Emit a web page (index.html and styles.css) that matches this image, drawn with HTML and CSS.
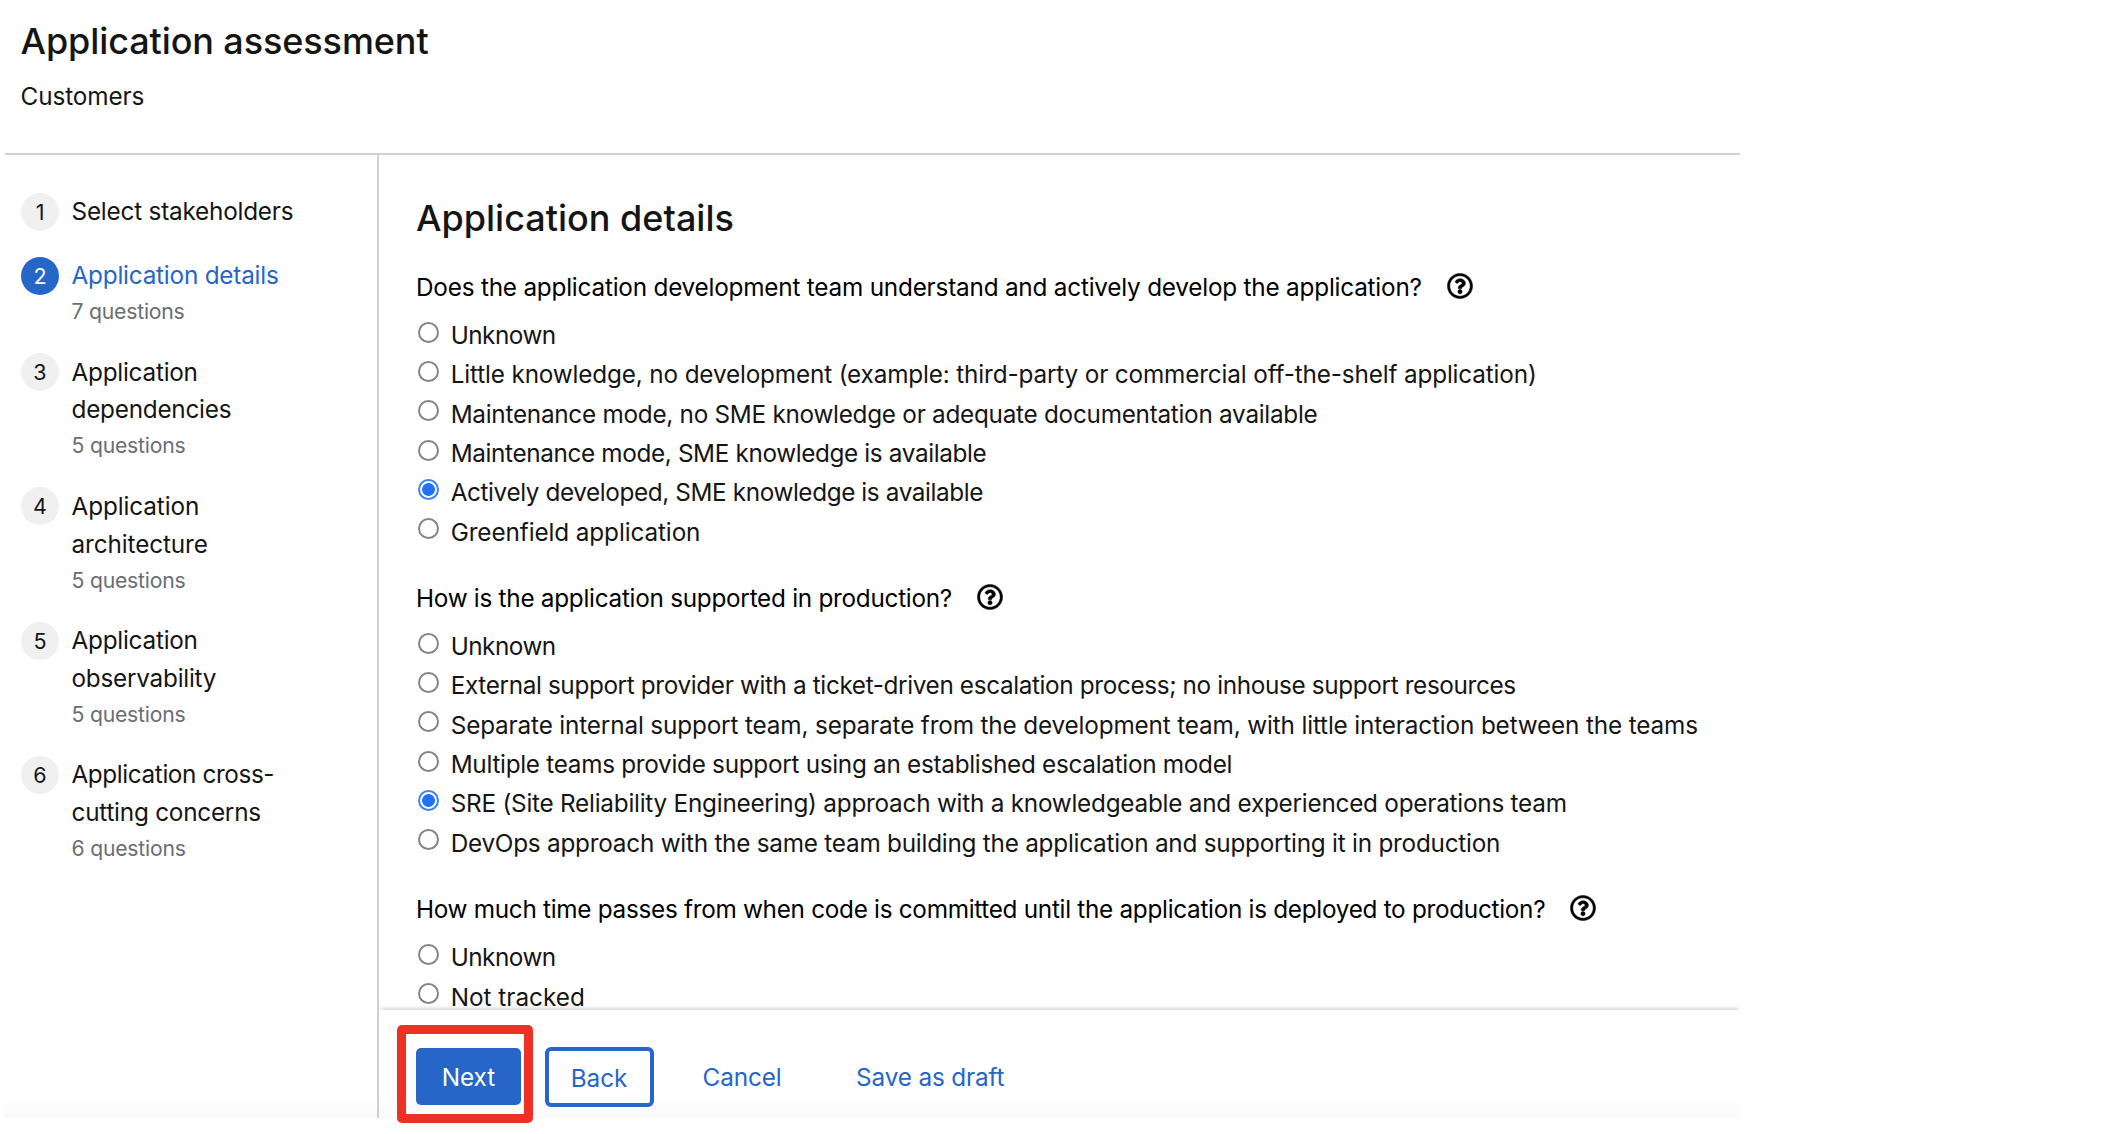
FILE: index.html
```html
<!DOCTYPE html>
<html lang="en">
<head>
<meta charset="utf-8">
<title>Application assessment</title>
<link rel="stylesheet" href="styles.css">
</head>
<body>
<svg width="0" height="0" class="sprite" aria-hidden="true">
  <symbol id="help" viewBox="0 0 512 512"><path d="M256 8C119.043 8 8 119.083 8 256c0 136.997 111.043 248 248 248s248-111.003 248-248C504 119.083 392.957 8 256 8zm0 448c-110.532 0-200-89.431-200-200 0-110.495 89.472-200 200-200 110.491 0 200 89.471 200 200 0 110.53-89.431 200-200 200zm107.244-255.2c0 67.052-72.421 68.084-72.421 92.863V300c0 6.627-5.373 12-12 12h-45.647c-6.627 0-12-5.373-12-12v-8.659c0-35.745 27.1-50.034 47.579-61.516 17.561-9.845 28.324-16.541 28.324-29.579 0-17.246-21.999-28.693-39.784-28.693-23.189 0-33.894 10.977-48.942 29.969-4.057 5.12-11.46 6.071-16.666 2.124l-27.824-21.098c-5.107-3.872-6.251-11.066-2.644-16.363C184.846 131.491 214.94 112 261.794 112c49.071 0 101.45 38.304 101.45 88.8zM298 368c0 23.159-18.841 42-42 42s-42-18.841-42-42 18.841-42 42-42 42 18.841 42 42z"/></symbol>
</svg>
<div class="page">
  <header class="header">
    <h1 class="title">Application assessment</h1>
    <p class="subtitle tr-10">Customers</p>
  </header>
  <div class="wizard">
    <nav class="nav">
      <ol class="steps">
        <li class="step"><span class="num">1</span><div class="step-body"><div class="tr-20">Select stakeholders</div></div></li>
        <li class="step current"><span class="num">2</span><div class="step-body"><div class="tr-20">Application details</div><div class="count">7 questions</div></div></li>
        <li class="step"><span class="num">3</span><div class="step-body"><div class="tr-23">Application<br>dependencies</div><div class="count">5 questions</div></div></li>
        <li class="step"><span class="num">4</span><div class="step-body"><div class="tr-10">Application<br>architecture</div><div class="count">5 questions</div></div></li>
        <li class="step"><span class="num">5</span><div class="step-body"><div class="tr-23">Application<br>observability</div><div class="count">5 questions</div></div></li>
        <li class="step"><span class="num">6</span><div class="step-body"><div><span class="tr-40">Application cross-</span><br><span class="tr-23">cutting concerns</span></div><div class="count">6 questions</div></div></li>
      </ol>
    </nav>
    <div class="main">
      <main class="content">
        <h2 class="title section-title">Application details</h2>

        <section class="group">
          <h3 class="question"><span class="tr-20">Does the application development team understand and actively develop the application?</span><svg class="help"><use href="#help"/></svg></h3>
          <label class="option"><span class="radio"></span><span class="tr-45">Unknown</span></label>
          <label class="option"><span class="radio"></span><span class="tr-15">Little knowledge, no development (example: third-party or commercial off-the-shelf application)</span></label>
          <label class="option"><span class="radio"></span><span class="tr-25">Maintenance mode, no SME knowledge or adequate documentation available</span></label>
          <label class="option"><span class="radio"></span><span class="tr-35">Maintenance mode, SME knowledge is available</span></label>
          <label class="option"><span class="radio checked"></span><span class="tr-40">Actively developed, SME knowledge is available</span></label>
          <label class="option"><span class="radio"></span><span class="tr-10">Greenfield application</span></label>
        </section>

        <section class="group">
          <h3 class="question"><span class="tr-25">How is the application supported in production?</span><svg class="help"><use href="#help"/></svg></h3>
          <label class="option"><span class="radio"></span><span class="tr-45">Unknown</span></label>
          <label class="option"><span class="radio"></span><span class="tr-35">External support provider with a ticket-driven escalation process; no inhouse support resources</span></label>
          <label class="option"><span class="radio"></span><span class="tr-15">Separate internal support team, separate from the development team, with little interaction between the teams</span></label>
          <label class="option"><span class="radio"></span><span class="tr-28">Multiple teams provide support using an established escalation model</span></label>
          <label class="option"><span class="radio checked"></span><span class="tr-23">SRE (Site Reliability Engineering) approach with a knowledgeable and experienced operations team</span></label>
          <label class="option"><span class="radio"></span><span class="tr-23">DevOps approach with the same team building the application and supporting it in production</span></label>
        </section>

        <section class="group">
          <h3 class="question"><span class="tr-28">How much time passes from when code is committed until the application is deployed to production?</span><svg class="help"><use href="#help"/></svg></h3>
          <label class="option"><span class="radio"></span><span class="tr-45">Unknown</span></label>
          <label class="option"><span class="radio"></span><span>Not tracked</span></label>
        </section>
      </main>
      <footer class="footer">
        <button class="btn primary">Next<span class="highlight"></span></button>
        <button class="btn secondary tr-10">Back</button>
        <button class="btn link cancel tr-10">Cancel</button>
        <button class="btn link draft tr-15">Save as draft</button>
      </footer>
    </div>
  </div>
</div>
</body>
</html>
```
FILE: styles.css
```css
* { box-sizing: border-box; }

body {
  margin: 0;
  background: #fff;
  color: #151515;
  font: 400 24.3px/38px Inter, "Red Hat Text", sans-serif;
  font-kerning: normal;
}

h1, h2, h3, p, ol { margin: 0; padding: 0; font-weight: 400; font-size: inherit; }
.sprite { display: block; }

.page {
  width: 1735px;
  height: 1134px;
  margin-left: 5px;
  padding-bottom: 16px;
  display: flex;
  flex-direction: column;
}

/* letter tracking */
.tr-10 { letter-spacing: -.1px; }
.tr-15 { letter-spacing: -.15px; }
.tr-20 { letter-spacing: -.205px; }
.tr-23 { letter-spacing: -.233px; }
.tr-25 { letter-spacing: -.265px; }
.tr-28 { letter-spacing: -.285px; }
.tr-35 { letter-spacing: -.36px; }
.tr-40 { letter-spacing: -.39px; }
.tr-45 { letter-spacing: -.5px; }

/* header */
.header {
  height: 155px;
  padding: 17.5px 15.5px 0;
  border-bottom: 2px solid #d2d2d2;
}
.title { font-size: 36px; line-height: 46px; font-weight: 500; letter-spacing: -.1px; }
.section-title { letter-spacing: 0; }
.subtitle { margin-top: 13.5px; }

/* navigation */
.wizard { flex: 1; display: flex; min-height: 0; }
.nav {
  width: 374px;
  padding: 38px 16px 0;
  border-right: 2px solid #d2d2d2;
  background: linear-gradient(#fff calc(100% - 22px), #f9f9f9);
}
.steps { list-style: none; display: flex; flex-direction: column; gap: 26.4px; line-height: 37.8px; }
.step { display: flex; gap: 12.5px; }
.num {
  width: 38px;
  height: 38px;
  margin: -.4px 0 0;
  border-radius: 50%;
  background: #f0f0f0;
  font-size: 21.5px;
  line-height: 38px;
  text-align: center;
}
.count {
  margin-top: 1.2px;
  color: #6a6e73;
  font-size: 21.2px;
  line-height: 31px;
  letter-spacing: -.22px;
}
.current { color: #2566c8; }
.current .num { background: #2566c8; color: #fff; }

/* questions */
.main { flex: 1; display: flex; flex-direction: column; min-width: 0; }
.content { height: 855px; padding: 39.7px 0 0 37px; overflow: hidden; }
.group { margin-top: 27.85px; }
.section-title + .group { margin-top: 27.1px; }
.question { display: flex; align-items: center; margin: 0 0 9.4px; color: #000; }
.help { width: 26px; height: 26px; margin: -1.4px 0 0 25px; fill: #000; stroke: #000; stroke-width: 9; }
.option { display: flex; gap: 12px; height: 39.3px; padding-left: 1.7px; line-height: 40.5px; }
.radio {
  width: 21px;
  height: 21px;
  margin-top: 6.6px;
  border: 2px solid #858585;
  border-radius: 50%;
}
.radio.checked {
  border: 2px solid #3b82f8;
  background: radial-gradient(circle, #2272f5 6px, #fff 6.8px);
}

/* footer */
.footer {
  position: relative;
  height: 108px;
  padding: 38px 0 0 37px;
  display: flex;
  align-items: flex-start;
  background: linear-gradient(#fff calc(100% - 22px), #f9f9f9);
  box-shadow: 0 -4px 4px -2px rgba(3, 3, 3, .16);
}
.btn {
  position: relative;
  height: 57px;
  padding: 0;
  border: 0;
  border-radius: 5px;
  background: none;
  color: #2566c8;
  font-family: inherit;
  font-size: inherit;
  line-height: 59px;
}
.primary { width: 105px; background: #2566c8; color: #fff; }
.secondary {
  width: 109px;
  height: 60px;
  margin: -1px 0 0 23.5px;
  border: 4px solid #2566c8;
  border-radius: 6px;
  line-height: 54px;
}
.cancel { margin-left: 49px; }
.draft { margin-left: 74.5px; }
.highlight {
  position: absolute;
  inset: -23px -12px -18px -19px;
  border: 9px solid #ee3124;
  border-radius: 5px;
}
```
